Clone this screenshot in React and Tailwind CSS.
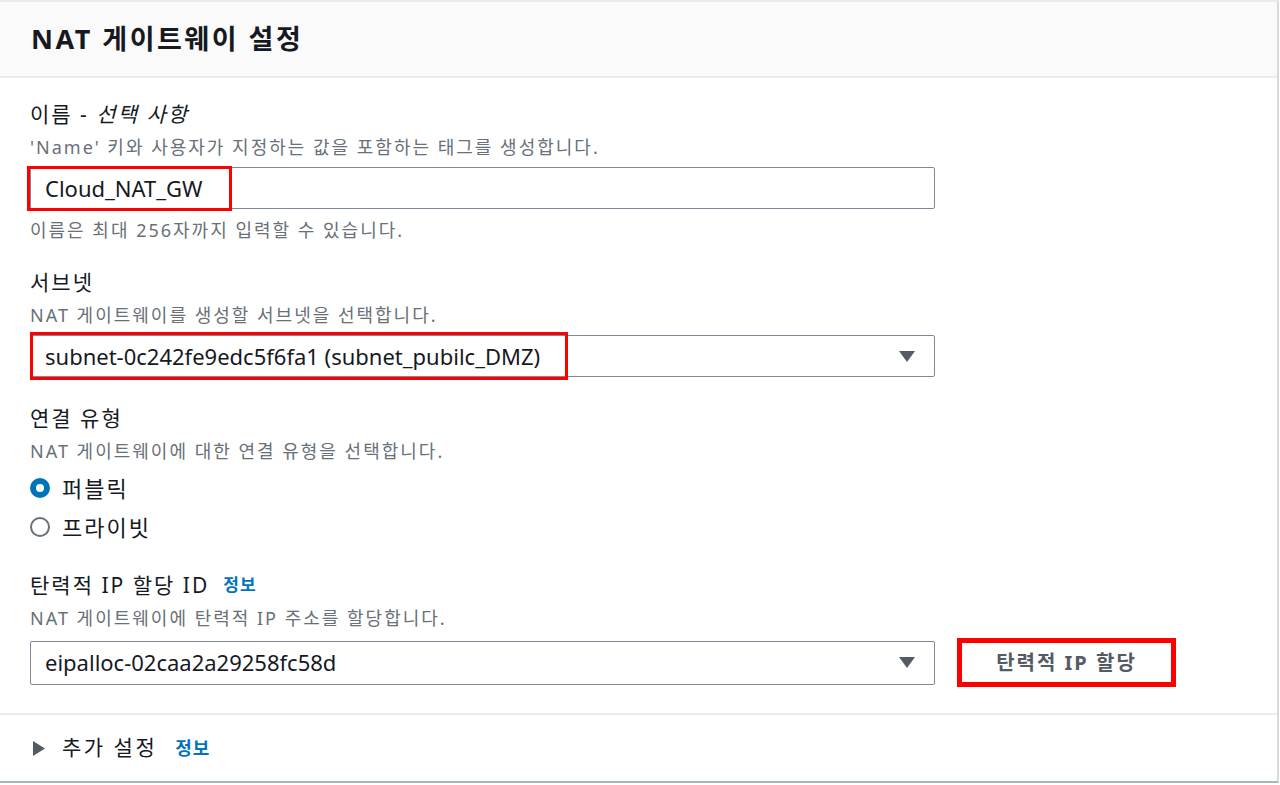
import { useState } from 'react';

const Caret = () => (
  <svg width="16" height="11" viewBox="0 0 16 11" className="shrink-0">
    <polygon points="0,0 16,0 8,11" fill="#545b64" />
  </svg>
);

const Field = ({ label, desc, className, children }) => (
  <div className={className}>
    <div className="h-[28px] leading-[28px] text-[21px] tracking-[2px] flex items-center">{label}</div>
    <div className="mt-[8px] h-[22px] leading-[22px] text-[18px] tracking-[2px] text-[#687078]">{desc}</div>
    {children}
  </div>
);

const Radio = ({ checked, label, onClick, className }) => (
  <div onClick={onClick} className={`flex items-center gap-[12px] h-[30px] cursor-pointer ${className}`}>
    {checked ? (
      <span className="w-[20px] h-[20px] rounded-full border-[6px] border-[#0073bb] bg-white" />
    ) : (
      <span className="w-[20px] h-[20px] rounded-full border-2 border-[#687078] bg-white" />
    )}
    <span className="text-[22px] tracking-[2px] leading-[30px]">{label}</span>
  </div>
);

export default function App() {
  const [type, setType] = useState('public');

  return (
    <div className="w-[1280px] h-[785px] bg-white text-[#16191f] font-['Noto_Sans','Noto_Sans_CJK_KR',sans-serif]">
      <div className="w-[1279px] h-[783px] flex flex-col border-t-2 border-t-[#e9ebed] border-r-2 border-r-[#d5dbdb] border-b-2 border-b-[#aab7b8]">
        <div className="h-[76px] shrink-0 bg-[#fafafa] border-b-2 border-[#eaeded] flex items-center px-[31px]">
          <h2 className="text-[27px] font-bold tracking-[2.5px]">NAT 게이트웨이 설정</h2>
        </div>

        <div className="pl-[30px] pt-[22px]">
          <Field
            label={<span>이름 - <i>선택 사항</i></span>}
            desc="'Name' 키와 사용자가 지정하는 값을 포함하는 태그를 생성합니다."
          >
            <div className="relative mt-[9px] w-[905px] h-[42px] border border-[#7d8998] rounded-[2px] flex items-center pl-[14px] text-[22px]">
              Cloud_NAT_GW
              <div className="absolute -left-[4px] -top-[2px] w-[205px] h-[45px] border-[3px] border-[#ff0000]" />
            </div>
            <div className="mt-[10px] h-[22px] leading-[22px] text-[18px] tracking-[2px] text-[#687078]">
              이름은 최대 256자까지 입력할 수 있습니다.
            </div>
          </Field>

          <Field className="mt-[27px]" label="서브넷" desc="NAT 게이트웨이를 생성할 서브넷을 선택합니다.">
            <div className="relative mt-[9px] w-[905px] h-[42px] border border-[#7d8998] rounded-[2px] flex items-center justify-between pl-[14px] pr-[19px] text-[22px]">
              <span>subnet-0c242fe9edc5f6fa1 (subnet_pubilc_DMZ)</span>
              <Caret />
              <div className="absolute -left-[1px] -top-[4px] w-[538px] h-[48px] border-[3px] border-[#ff0000]" />
            </div>
          </Field>

          <Field className="mt-[27px]" label="연결 유형" desc="NAT 게이트웨이에 대한 연결 유형을 선택합니다.">
            <Radio className="mt-[11px]" checked={type === 'public'} label="퍼블릭" onClick={() => setType('public')} />
            <Radio className="mt-[9px]" checked={type === 'private'} label="프라이빗" onClick={() => setType('private')} />
          </Field>

          <Field
            className="mt-[29px]"
            label={
              <>
                <span>탄력적 IP 할당 ID</span>
                <span className="ml-[14px] text-[17px] tracking-[1px] font-bold text-[#0073bb]">정보</span>
              </>
            }
            desc="NAT 게이트웨이에 탄력적 IP 주소를 할당합니다."
          >
            <div className="mt-[9px] flex items-center gap-[22px]">
              <div className="w-[905px] h-[44px] border border-[#7d8998] rounded-[2px] flex items-center justify-between pl-[14px] pr-[19px] text-[22px]">
                <span>eipalloc-02caa2a29258fc58d</span>
                <Caret />
              </div>
              <button className="w-[219px] h-[49px] border-[5px] border-[#ff0000] bg-white flex items-center justify-center text-[20px] font-bold tracking-[2px] text-[#545b64]">
                탄력적 IP 할당
              </button>
            </div>
          </Field>
        </div>

        <div className="mt-[26px] border-t-2 border-[#eaeded] flex-1 flex items-center pl-[33px]">
          <svg width="12" height="15" viewBox="0 0 12 15" className="shrink-0">
            <polygon points="0,0 12,7.5 0,15" fill="#545b64" />
          </svg>
          <span className="ml-[17px] text-[21px] tracking-[2.5px]">추가 설정</span>
          <span className="ml-[18px] text-[18px] tracking-[1px] font-bold text-[#0073bb]">정보</span>
        </div>
      </div>
    </div>
  );
}
